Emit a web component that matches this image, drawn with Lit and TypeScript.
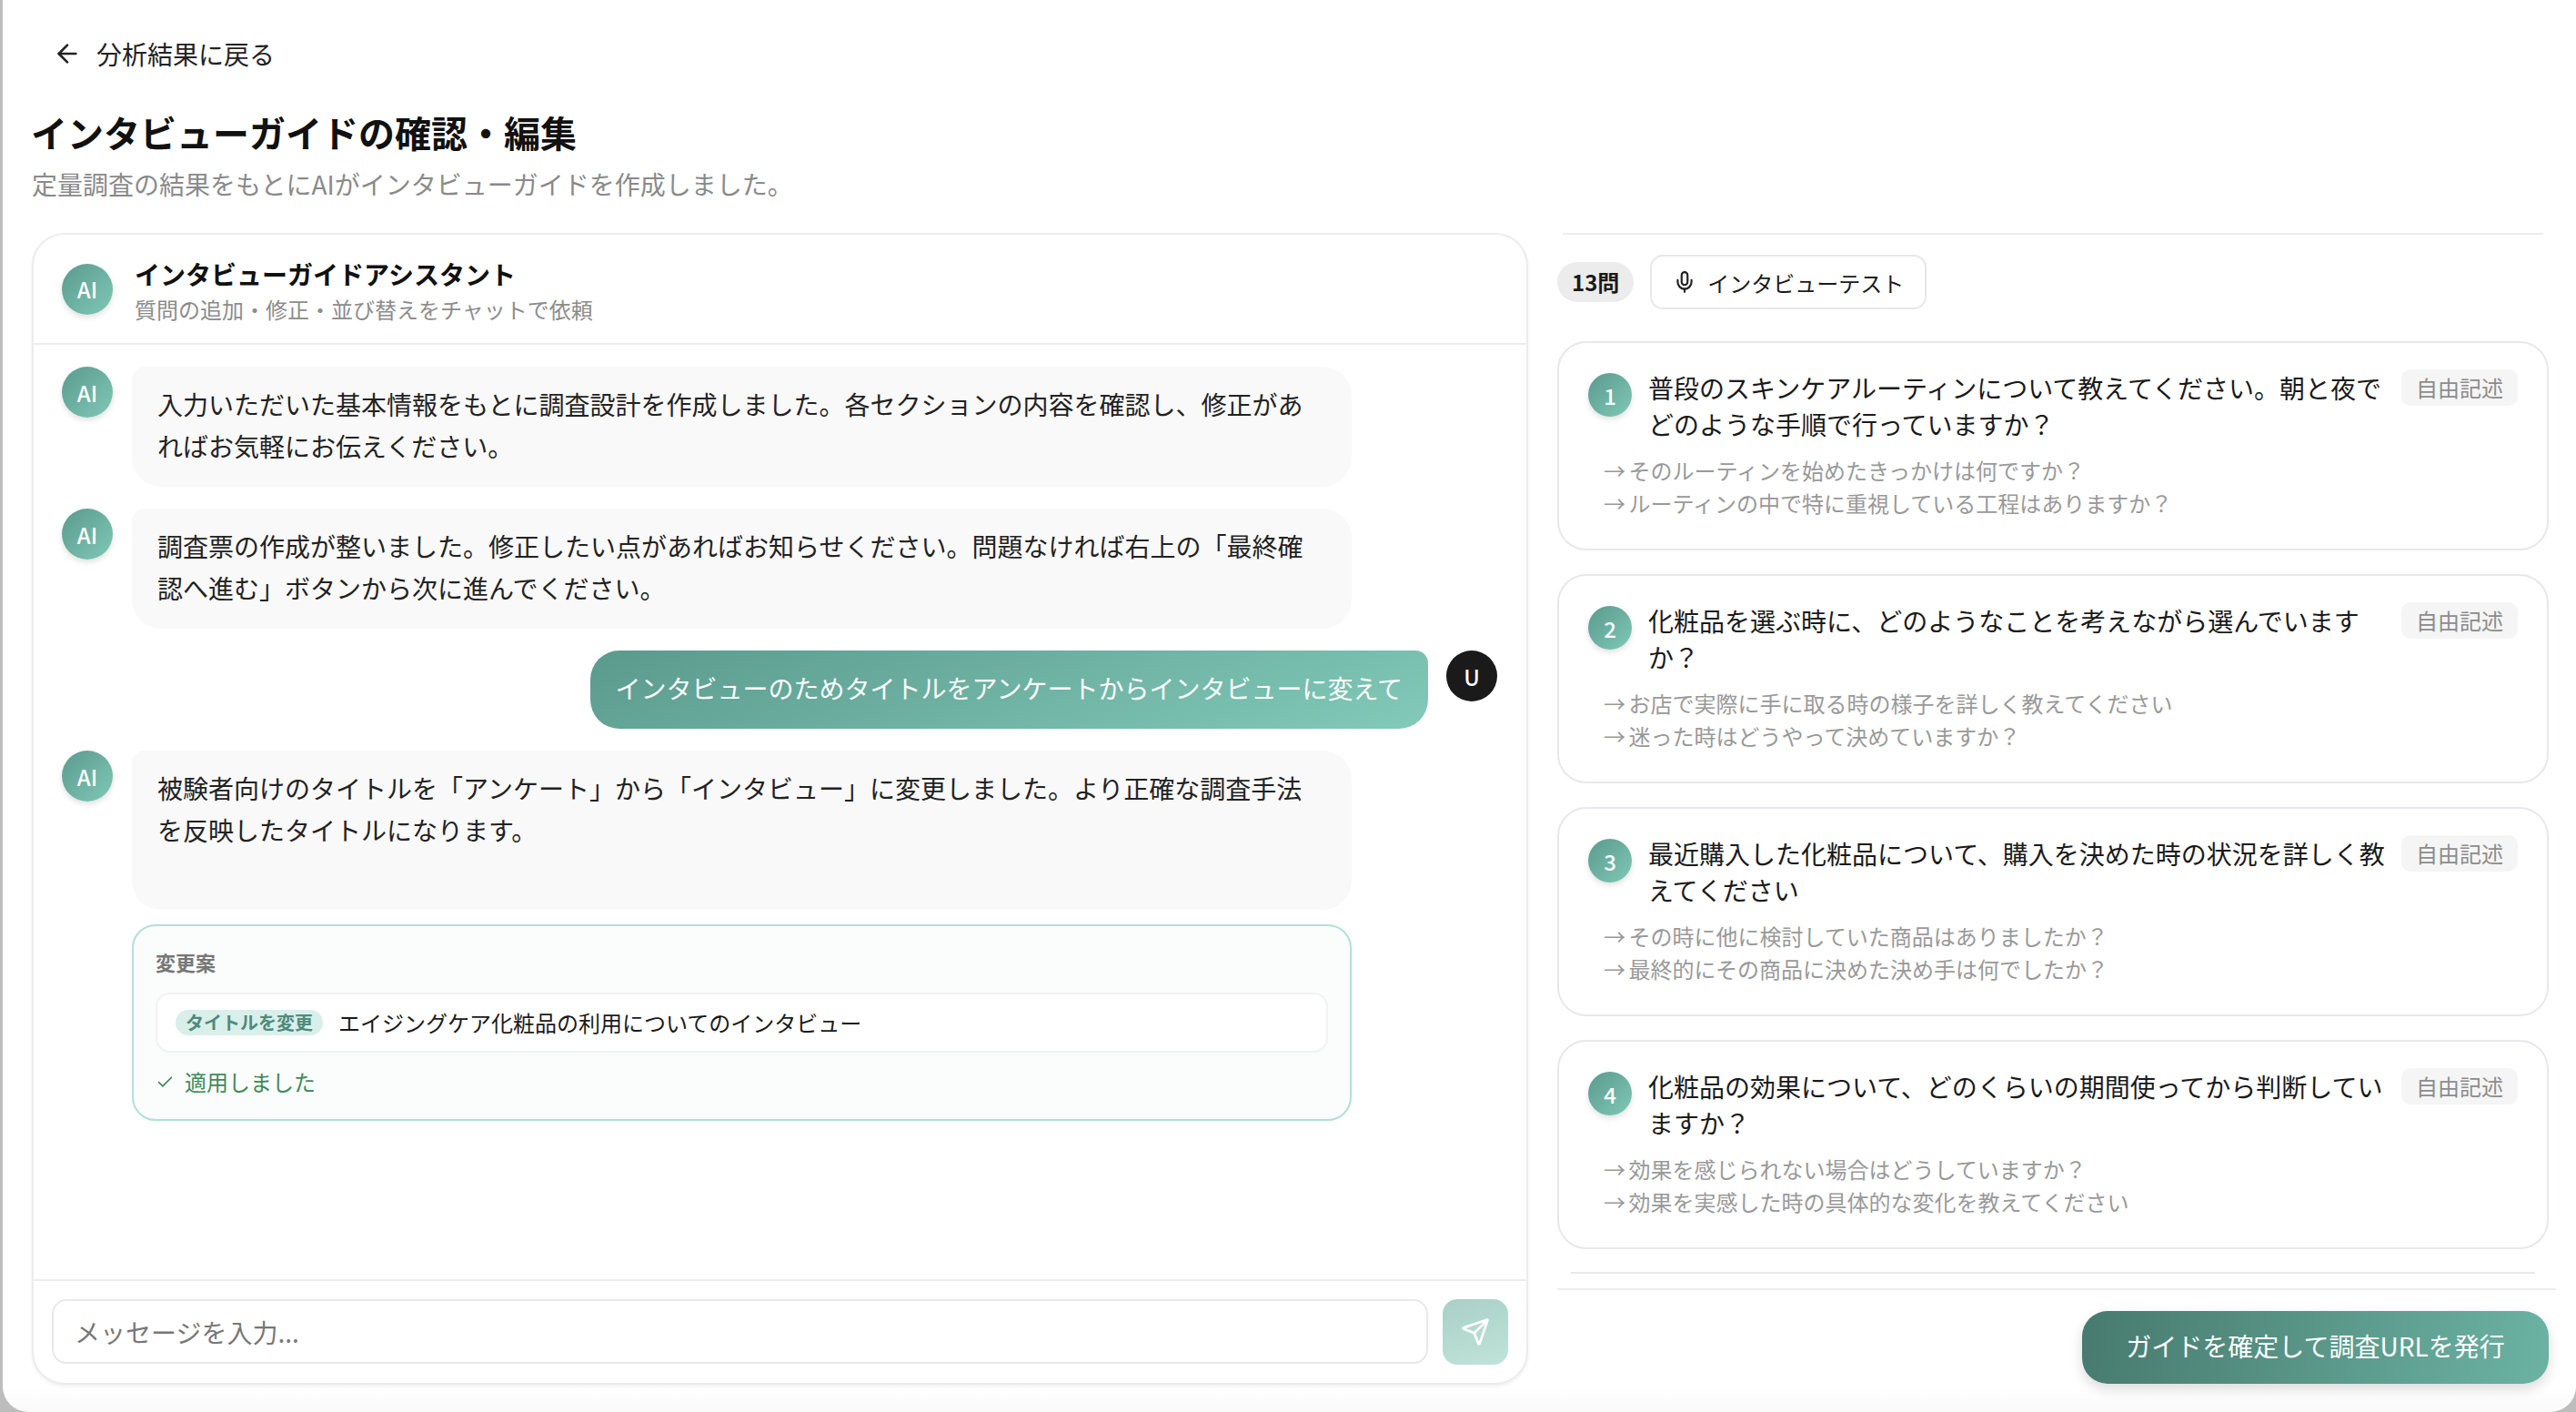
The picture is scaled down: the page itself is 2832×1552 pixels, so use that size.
import { LitElement, css, html } from 'lit'
import { customElement } from 'lit/decorators.js'

interface Question {
  text: string
  subs: string[]
}

const QUESTIONS: Question[] = [
  {
    text: '普段のスキンケアルーティンについて教えてください。朝と夜でどのような手順で行っていますか？',
    subs: ['そのルーティンを始めたきっかけは何ですか？', 'ルーティンの中で特に重視している工程はありますか？'],
  },
  {
    text: '化粧品を選ぶ時に、どのようなことを考えながら選んでいますか？',
    subs: ['お店で実際に手に取る時の様子を詳しく教えてください', '迷った時はどうやって決めていますか？'],
  },
  {
    text: '最近購入した化粧品について、購入を決めた時の状況を詳しく教えてください',
    subs: ['その時に他に検討していた商品はありましたか？', '最終的にその商品に決めた決め手は何でしたか？'],
  },
  {
    text: '化粧品の効果について、どのくらいの期間使ってから判断していますか？',
    subs: ['効果を感じられない場合はどうしていますか？', '効果を実感した時の具体的な変化を教えてください'],
  },
]

@customElement('app-root')
export class AppRoot extends LitElement {
  static styles = css`
    :host {
      display: block;
      width: 2832px;
      height: 1552px;
      overflow: hidden;
      background: #bdbdbd;
      color: #1a1a1a;
      font-family: 'Noto Sans CJK JP', 'Noto Sans', sans-serif;
      font-size: 28px;
    }
    .window {
      box-sizing: border-box;
      height: 1552px;
      margin-left: 3px;
      padding: 39px 30px 0 32px;
      border-radius: 0 0 28px 28px;
      background: linear-gradient(180deg, #fff 1525px, #fafafa 1552px);
    }
    .back {
      display: flex;
      align-items: center;
      gap: 16px;
      height: 40px;
      padding-left: 23px;
      line-height: 40px;
      color: #222;
    }
    .back svg {
      width: 32px;
      height: 32px;
      stroke: #222;
    }
    h1 {
      margin: 38px 0 0 -1px;
      font-size: 40px;
      line-height: 56px;
      font-weight: 700;
      color: #111;
    }
    .lead {
      margin: 8px 0 0;
      font-size: 28px;
      line-height: 42px;
      color: #8a8a8a;
    }
    .columns {
      display: flex;
      align-items: flex-start;
      gap: 32px;
      margin-top: 33px;
    }

    /* chat */
    .chat {
      box-sizing: border-box;
      display: flex;
      flex-direction: column;
      flex: none;
      width: 1645px;
      height: 1266px;
      border: 2px solid #ececec;
      border-radius: 36px;
      background: #fff;
      box-shadow: 0 2px 4px rgba(0, 0, 0, 0.06);
    }
    .chat-head {
      box-sizing: border-box;
      display: flex;
      align-items: center;
      gap: 24px;
      height: 121px;
      padding: 0 30px 0 31px;
      border-bottom: 2px solid #ececec;
      flex: none;
    }
    .chat-names {
      padding-top: 4px;
    }
    .chat-title {
      font-weight: 700;
      line-height: 38px;
      color: #111;
    }
    .chat-sub {
      margin-top: 2px;
      font-size: 24px;
      line-height: 36px;
      color: #8c8c8c;
    }
    .avatar {
      display: flex;
      align-items: center;
      justify-content: center;
      flex: none;
      width: 56px;
      height: 56px;
      border-radius: 50%;
      background: linear-gradient(135deg, #5a9a8c, #80c8b8);
      color: #fff;
      font-size: 24px;
      font-weight: 500;
      box-shadow: 0 3px 6px rgba(0, 0, 0, 0.12);
    }
    .avatar.user {
      background: #1a1a1a;
      box-shadow: none;
      font-size: 24px;
    }
    .messages {
      flex: 1;
      padding: 24px 32px 0 31px;
    }
    .row {
      display: flex;
      align-items: flex-start;
      gap: 21px;
      margin-bottom: 24px;
    }
    .row.mine {
      justify-content: flex-end;
      gap: 20px;
    }
    .bubble {
      box-sizing: border-box;
      width: 1341px;
      padding: 18px 28px 22px;
      border-radius: 14px 32px 32px 32px;
      background: #f9f9f9;
      line-height: 46px;
      color: #222;
    }
    .bubble.tall {
      padding-bottom: 65px;
    }
    .mine .bubble {
      width: auto;
      border-radius: 32px 14px 32px 32px;
      background: linear-gradient(160deg, #5a9a8c, #82cab9);
      color: #fff;
    }
    .proposal {
      box-sizing: border-box;
      width: 1341px;
      height: 216px;
      margin: -8px 0 0 77px;
      padding: 23px 24px 0;
      border: 2px solid #b2e0d6;
      border-radius: 26px;
      background: #fbfcfc;
    }
    .proposal-label {
      font-size: 22px;
      line-height: 32px;
      font-weight: 600;
      color: #777;
    }
    .change {
      box-sizing: border-box;
      display: flex;
      align-items: center;
      gap: 17px;
      height: 66px;
      margin-top: 18px;
      padding: 0 20px;
      border: 2px solid #f2f2f2;
      border-radius: 16px;
      background: #fff;
      font-size: 24px;
      line-height: 34px;
    }
    .tag {
      padding: 0 11px;
      border-radius: 14px;
      background: #d9efea;
      color: #4f8a7c;
      font-size: 20px;
      line-height: 28px;
      font-weight: 600;
    }
    .applied {
      display: flex;
      align-items: center;
      gap: 11px;
      margin-top: 15px;
      font-size: 24px;
      line-height: 34px;
      color: #3f8a5c;
    }
    .applied svg {
      width: 21px;
      height: 21px;
      stroke: #3f8a5c;
    }
    .composer {
      box-sizing: border-box;
      display: flex;
      gap: 16px;
      height: 114px;
      padding: 20px 20px 0;
      border-top: 2px solid #ececec;
      flex: none;
    }
    .input {
      box-sizing: border-box;
      flex: 1;
      height: 71px;
      padding: 0 23px;
      border: 2px solid #e8e8e8;
      border-radius: 16px;
      line-height: 69px;
      color: #777;
    }
    .send {
      display: flex;
      align-items: center;
      justify-content: center;
      flex: none;
      width: 72px;
      height: 72px;
      border-radius: 16px;
      background: linear-gradient(160deg, #a9cfc6, #c0e4da);
    }
    .send svg {
      width: 32px;
      height: 32px;
      stroke: #fff;
    }

    /* guide */
    .guide {
      flex: 1;
      min-width: 0;
    }
    .top-line {
      height: 2px;
      margin: 0 6px;
      background: #ececec;
    }
    .tools {
      display: flex;
      align-items: center;
      gap: 18px;
      height: 60px;
      margin: 22px 0 35px;
    }
    .count {
      padding: 0 16px;
      border-radius: 22px;
      background: #ececec;
      font-size: 24px;
      line-height: 44px;
      font-weight: 600;
    }
    .test {
      box-sizing: border-box;
      display: flex;
      align-items: center;
      gap: 12px;
      width: 304px;
      height: 60px;
      padding-left: 23px;
      border: 2px solid #e8e8e8;
      border-radius: 14px;
      font-size: 24px;
    }
    .test svg {
      width: 26px;
      height: 26px;
      stroke: #222;
    }
    .questions {
      display: flex;
      flex-direction: column;
      gap: 26px;
    }
    .question {
      box-sizing: border-box;
      height: 230px;
      padding: 29px 32px 0;
      border: 2px solid #e8e8ec;
      border-radius: 32px;
      background: #fff;
    }
    .q-head {
      display: flex;
      align-items: flex-start;
    }
    .q-no {
      display: flex;
      align-items: center;
      justify-content: center;
      flex: none;
      width: 48px;
      height: 48px;
      margin: 4px 18px 0 0;
      border-radius: 50%;
      background: linear-gradient(135deg, #5a9a8c, #80c8b8);
      color: #fff;
      font-size: 24px;
      font-weight: 500;
      box-shadow: 0 3px 6px rgba(0, 0, 0, 0.12);
    }
    .q-text {
      flex: 1;
      line-height: 40px;
      color: #1a1a1a;
    }
    .q-kind {
      flex: none;
      padding: 0 16px;
      border-radius: 10px;
      background: #f5f5f5;
      color: #8c8c8c;
      font-size: 24px;
      line-height: 40px;
    }
    .q-subs {
      margin: 13px 0 0 17px;
      color: #999;
      font-size: 24px;
      line-height: 36px;
      word-spacing: -2px;
    }
    .end-line {
      height: 2px;
      margin: 25px 15px 0;
      background: #e8e8ec;
    }
    .foot {
      display: flex;
      justify-content: flex-end;
      margin: 16px -8px 0 0;
      padding: 23px 8px 0 0;
      border-top: 2px solid #ececec;
    }
    .confirm {
      box-sizing: border-box;
      display: flex;
      align-items: center;
      justify-content: center;
      width: 513px;
      height: 80px;
      padding-bottom: 4px;
      border-radius: 28px;
      background: linear-gradient(100deg, #477a6e, #6bb3a3);
      color: #fff;
      box-shadow: 0 6px 14px rgba(0, 0, 0, 0.14);
    }
  `

  private renderAi(body: unknown, tall = false) {
    return html`
      <div class="row">
        <div class="avatar">AI</div>
        <div class="bubble ${tall ? 'tall' : ''}">${body}</div>
      </div>
    `
  }

  render() {
    return html`
      <div class="window">
        <div class="back">
          <svg viewBox="0 0 24 24" fill="none" stroke-width="2" stroke-linecap="round" stroke-linejoin="round">
            <path d="m12 19-7-7 7-7" />
            <path d="M19 12H5" />
          </svg>
          <span>分析結果に戻る</span>
        </div>
        <h1>インタビューガイドの確認・編集</h1>
        <p class="lead">定量調査の結果をもとにAIがインタビューガイドを作成しました。</p>
        <div class="columns">
          <section class="chat">
            <header class="chat-head">
              <div class="avatar">AI</div>
              <div class="chat-names">
                <div class="chat-title">インタビューガイドアシスタント</div>
                <div class="chat-sub">質問の追加・修正・並び替えをチャットで依頼</div>
              </div>
            </header>
            <div class="messages">
              ${this.renderAi('入力いただいた基本情報をもとに調査設計を作成しました。各セクションの内容を確認し、修正があればお気軽にお伝えください。')}
              ${this.renderAi('調査票の作成が整いました。修正したい点があればお知らせください。問題なければ右上の「最終確認へ進む」ボタンから次に進んでください。')}
              <div class="row mine">
                <div class="bubble">インタビューのためタイトルをアンケートからインタビューに変えて</div>
                <div class="avatar user">U</div>
              </div>
              ${this.renderAi('被験者向けのタイトルを「アンケート」から「インタビュー」に変更しました。より正確な調査手法を反映したタイトルになります。', true)}
              <div class="proposal">
                <div class="proposal-label">変更案</div>
                <div class="change">
                  <span class="tag">タイトルを変更</span>
                  <span>エイジングケア化粧品の利用についてのインタビュー</span>
                </div>
                <div class="applied">
                  <svg viewBox="0 0 24 24" fill="none" stroke-width="2" stroke-linecap="round" stroke-linejoin="round">
                    <path d="M20 6 9 17l-5-5" />
                  </svg>
                  <span>適用しました</span>
                </div>
              </div>
            </div>
            <div class="composer">
              <div class="input">メッセージを入力...</div>
              <div class="send">
                <svg viewBox="0 0 24 24" fill="none" stroke-width="2" stroke-linecap="round" stroke-linejoin="round">
                  <path d="M14.536 21.686a.5.5 0 0 0 .937-.024l6.5-19a.496.496 0 0 0-.635-.635l-19 6.5a.5.5 0 0 0-.024.937l7.93 3.18a2 2 0 0 1 1.112 1.112z" />
                  <path d="m21.854 2.147-10.94 10.939" />
                </svg>
              </div>
            </div>
          </section>
          <section class="guide">
            <div class="top-line"></div>
            <div class="tools">
              <span class="count">13問</span>
              <div class="test">
                <svg viewBox="0 0 24 24" fill="none" stroke-width="2" stroke-linecap="round" stroke-linejoin="round">
                  <path d="M12 2a3 3 0 0 0-3 3v7a3 3 0 0 0 6 0V5a3 3 0 0 0-3-3Z" />
                  <path d="M19 10v2a7 7 0 0 1-14 0v-2" />
                  <line x1="12" x2="12" y1="19" y2="22" />
                </svg>
                <span>インタビューテスト</span>
              </div>
            </div>
            <div class="questions">
              ${QUESTIONS.map(
                (q, i) => html`
                  <article class="question">
                    <div class="q-head">
                      <div class="q-no">${i + 1}</div>
                      <div class="q-text">${q.text}</div>
                      <div class="q-kind">自由記述</div>
                    </div>
                    <div class="q-subs">
                      ${q.subs.map((s) => html`<div>→ ${s}</div>`)}
                    </div>
                  </article>
                `,
              )}
            </div>
            <div class="end-line"></div>
            <div class="foot">
              <div class="confirm">ガイドを確定して調査URLを発行</div>
            </div>
          </section>
        </div>
      </div>
    `
  }
}

declare global {
  interface HTMLElementTagNameMap {
    'app-root': AppRoot
  }
}
